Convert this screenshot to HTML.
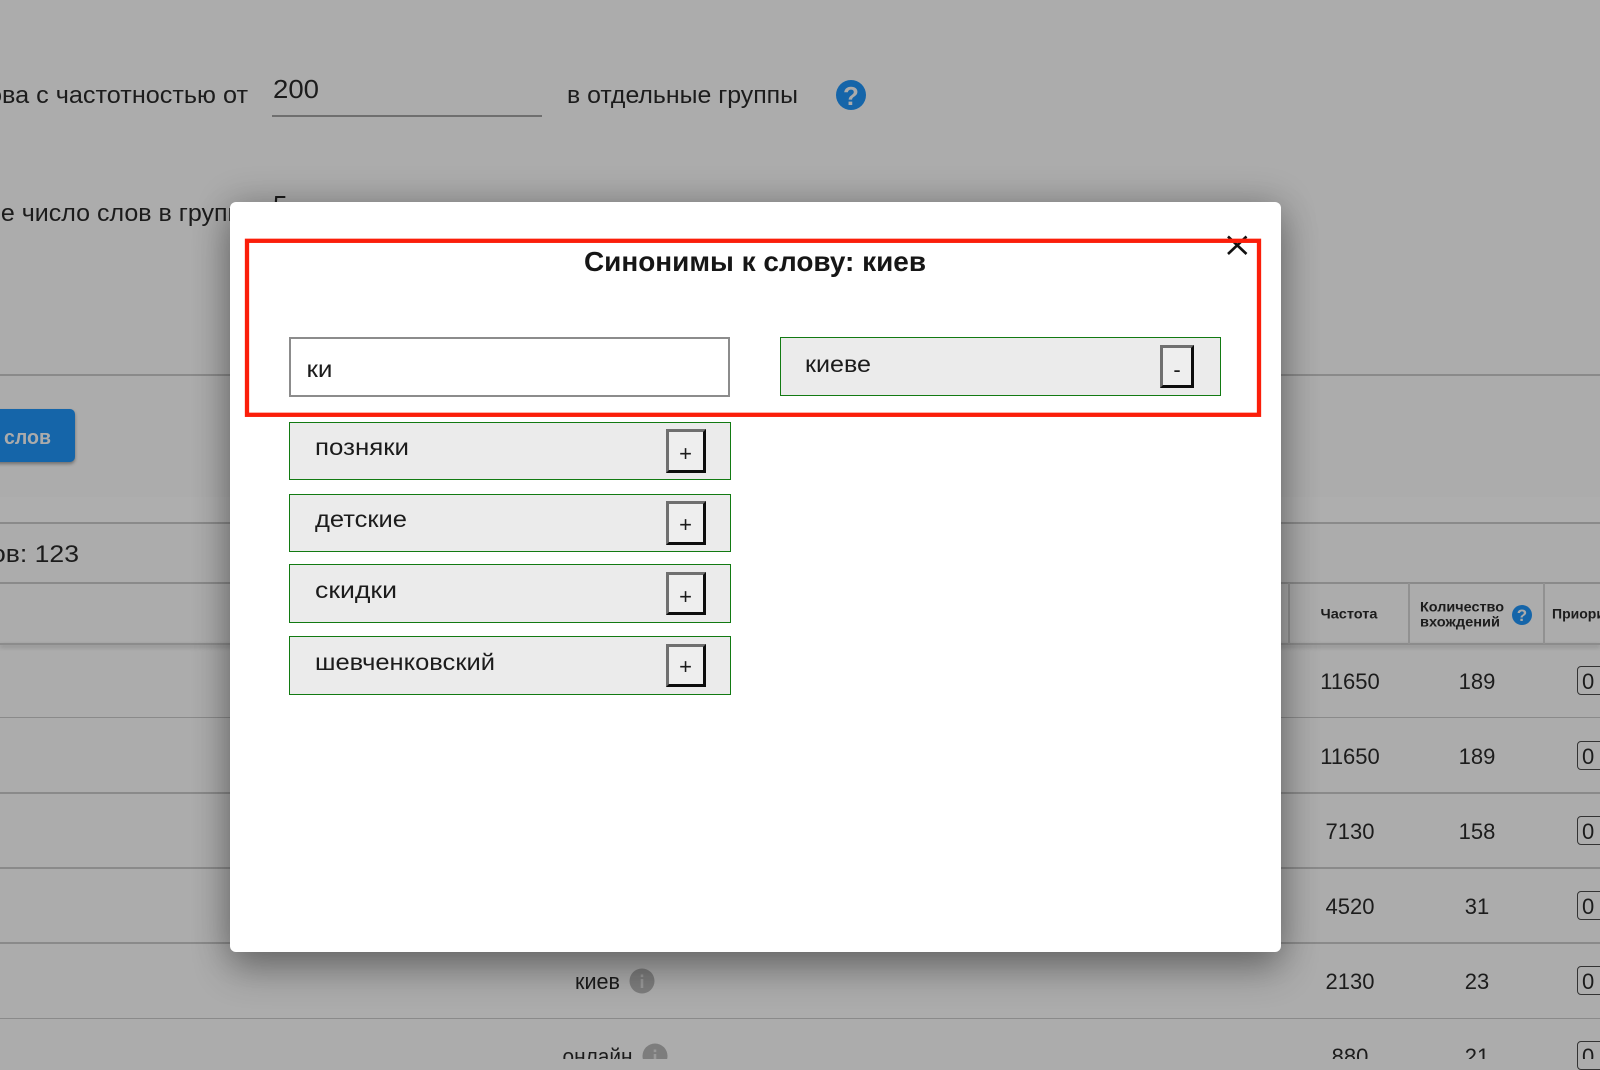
<!DOCTYPE html>
<html lang="ru"><head><meta charset="utf-8"><title>Синонимы</title>
<style>
html,body{margin:0;padding:0;background:#acacac;width:1600px;height:1059px;overflow:hidden}
.a{position:absolute}
svg{position:absolute;left:0;top:0}
text{font-family:"Liberation Sans",sans-serif;fill:#1c1c1c}
.ln{position:absolute;background:#8a8a8a;height:1.5px}
.vl{position:absolute;background:#919191;width:1.5px;top:583px;height:61px}
.it{position:absolute;left:289px;width:439.500px;box-sizing:content-box;background:#ebebeb;border:1.500px solid #127a12}
.bt{position:absolute;box-sizing:border-box;width:40px;border:3px solid;border-color:#6f6f6f #0c0c0c #0c0c0c #6f6f6f;background:#eee}
</style></head><body>
<div class="ln" style="left:0;right:0;top:374px"></div>
<div class="a" style="left:0;top:497px;width:1600px;height:25px;background:#aeaeae"></div>
<div class="ln" style="left:0;right:0;top:522px"></div>
<div class="ln" style="left:0;right:0;top:582px"></div>
<div class="a" style="left:0;top:643px;width:1600px;height:2px;background:#8c8c8c;box-shadow:0 2px 4px rgba(0,0,0,.25)"></div>
<div class="vl" style="left:1288px"></div><div class="vl" style="left:1408px"></div><div class="vl" style="left:1543px"></div>
<div class="ln" style="left:0;right:0;top:716.500px"></div>
<div class="ln" style="left:0;right:0;top:792px"></div>
<div class="ln" style="left:0;right:0;top:867px"></div>
<div class="ln" style="left:0;right:0;top:942px"></div>
<div class="ln" style="left:0;right:0;top:1017.500px"></div>
<div class="a" style="left:272px;top:115px;width:270px;height:1.500px;background:#6f6f6f"></div>
<div class="a" style="left:-20px;top:409px;width:95px;height:53px;border-radius:5px;background:#1565a9;box-shadow:0 2px 3px rgba(0,0,0,.35)"></div>
<div class="a" style="left:1577px;top:666px;width:40px;height:27px;border:1.500px solid #333;border-radius:4px"></div>
<div class="a" style="left:1577px;top:741px;width:40px;height:27px;border:1.500px solid #333;border-radius:4px"></div>
<div class="a" style="left:1577px;top:816px;width:40px;height:27px;border:1.500px solid #333;border-radius:4px"></div>
<div class="a" style="left:1577px;top:891px;width:40px;height:27px;border:1.500px solid #333;border-radius:4px"></div>
<div class="a" style="left:1577px;top:966px;width:40px;height:27px;border:1.500px solid #333;border-radius:4px"></div>
<div class="a" style="left:1577px;top:1041px;width:40px;height:27px;border:1.500px solid #333;border-radius:4px"></div>
<svg width="1600" height="1059" viewBox="0 0 1600 1059">
<text x="-12" y="103" font-size="24" textLength="260" lengthAdjust="spacingAndGlyphs">ова с частотностью от</text>
<text x="273" y="98" font-size="26" textLength="46" lengthAdjust="spacingAndGlyphs">200</text>
<text x="567" y="103" font-size="24" textLength="231" lengthAdjust="spacingAndGlyphs">в отдельные группы</text>
<circle cx="851" cy="95" r="15" fill="#1565a9"/>
<text x="851" y="105" font-size="26" font-weight="bold" text-anchor="middle" style="fill:#ababab">?</text>
<text x="-13" y="221" font-size="24" textLength="268" lengthAdjust="spacingAndGlyphs">ое число слов в группе</text>
<text x="273" y="214" font-size="26">5</text>
<text x="4" y="444" font-size="20" font-weight="bold" textLength="47" lengthAdjust="spacingAndGlyphs" style="fill:#ababab">слов</text>
<text x="-9" y="562" font-size="24" textLength="88" lengthAdjust="spacingAndGlyphs">ов: 123</text>
<text x="1349" y="618.500" font-size="14" font-weight="bold" text-anchor="middle" textLength="57" lengthAdjust="spacingAndGlyphs">Частота</text>
<text x="1420" y="611.500" font-size="14" font-weight="bold" textLength="84" lengthAdjust="spacingAndGlyphs">Количество</text>
<text x="1420" y="626.500" font-size="14" font-weight="bold" textLength="80" lengthAdjust="spacingAndGlyphs">вхождений</text>
<circle cx="1522" cy="615" r="10" fill="#1565a9"/>
<text x="1522" y="621" font-size="17" font-weight="bold" text-anchor="middle" style="fill:#ababab">?</text>
<text x="1552" y="618.500" font-size="14" font-weight="bold">Приоритет</text>
<g font-size="22" text-anchor="middle" style="fill:#262626">
<text x="1350" y="689">11650</text><text x="1477" y="689">189</text>
<text x="1350" y="764">11650</text><text x="1477" y="764">189</text>
<text x="1350" y="839">7130</text><text x="1477" y="839">158</text>
<text x="1350" y="914">4520</text><text x="1477" y="914">31</text>
<text x="1350" y="989">2130</text><text x="1477" y="989">23</text>
<text x="1350" y="1064">880</text><text x="1477" y="1064">21</text>
</g>
<g font-size="22" style="fill:#262626">
<text x="1582" y="689">0</text><text x="1582" y="764">0</text><text x="1582" y="839">0</text><text x="1582" y="914">0</text><text x="1582" y="989">0</text><text x="1582" y="1064">0</text>
</g>
<text x="575" y="989" font-size="22" textLength="45" lengthAdjust="spacingAndGlyphs">киев</text>
<circle cx="642" cy="981" r="12.500" fill="#7d7d7d"/>
<rect x="640.700" y="979" width="2.600" height="9" fill="#999"/><rect x="640.700" y="974.500" width="2.600" height="2.600" fill="#999"/>
<text x="562.500" y="1064" font-size="22" textLength="70" lengthAdjust="spacingAndGlyphs">онлайн</text>
<circle cx="655" cy="1056" r="12.500" fill="#7d7d7d"/>
<rect x="653.700" y="1054" width="2.600" height="9" fill="#999"/><rect x="653.700" y="1049.500" width="2.600" height="2.600" fill="#999"/>
</svg>

<div class="a" style="left:230px;top:202px;width:1051px;height:750px;background:#fff;border-radius:6px;box-shadow:0 18px 38px rgba(0,0,0,.30),0 0 36px rgba(0,0,0,.22)"></div>

<div class="a" style="left:289px;top:337px;width:437px;height:55.500px;border:2px solid #8c8c8c;background:#fff"></div>
<div class="it" style="left:779.500px;top:337px;height:57px;width:439px"></div>
<div class="bt" style="left:1160px;top:345px;width:34px;height:43px"></div>
<div class="it" style="top:422px;height:56px"></div>
<div class="bt" style="left:666px;top:429px;height:44px"></div>
<div class="it" style="top:494px;height:56px"></div>
<div class="bt" style="left:666px;top:501px;height:44px"></div>
<div class="it" style="top:564px;height:57px"></div>
<div class="bt" style="left:666px;top:572px;height:43px"></div>
<div class="it" style="top:636px;height:57px"></div>
<div class="bt" style="left:666px;top:644px;height:43px"></div>

<svg width="1600" height="1059" viewBox="0 0 1600 1059">
<path d="M1228 236.500L1246.500 254M1246.500 236.500L1228 254" stroke="#111" stroke-width="2.600" fill="none"/>
<rect x="247" y="240.800" width="1012" height="174" fill="none" stroke="#fb1e0a" stroke-width="4.300"/>
<text x="584" y="271" font-size="28" font-weight="bold" textLength="342" lengthAdjust="spacingAndGlyphs" style="fill:#161616">Синонимы к слову: киев</text>
<text x="306.500" y="377" font-size="23" textLength="26" lengthAdjust="spacingAndGlyphs">ки</text>
<text x="805" y="372" font-size="23" textLength="66" lengthAdjust="spacingAndGlyphs">киеве</text>
<text x="315" y="455" font-size="23" textLength="94" lengthAdjust="spacingAndGlyphs">позняки</text>
<text x="315" y="527" font-size="23" textLength="92" lengthAdjust="spacingAndGlyphs">детские</text>
<text x="315" y="598" font-size="23" textLength="82" lengthAdjust="spacingAndGlyphs">скидки</text>
<text x="315" y="670" font-size="23" textLength="180" lengthAdjust="spacingAndGlyphs">шевченковский</text>
<g font-size="22" text-anchor="middle" style="fill:#111">
<text x="685.500" y="461">+</text><text x="685.500" y="532">+</text><text x="685.500" y="604">+</text><text x="685.500" y="674">+</text>
<text x="1177" y="377">-</text>
</g>
</svg>
</body></html>
